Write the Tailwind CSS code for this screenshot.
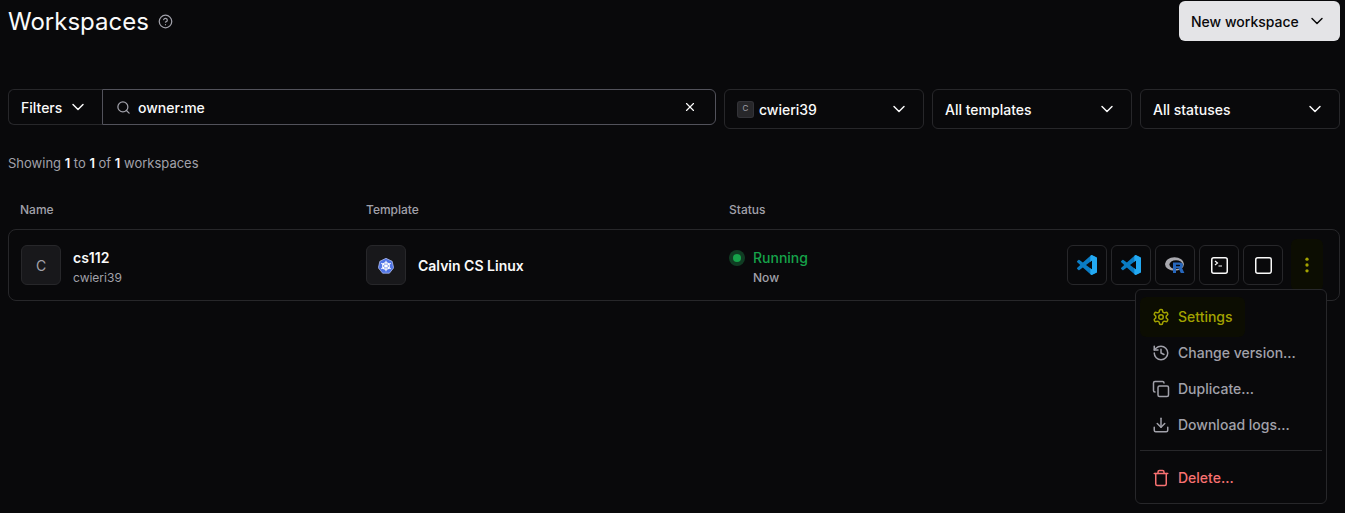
<!DOCTYPE html>
<html lang="en">
<head>
  <meta charset="UTF-8">
  <title>Workspaces</title>
  <script src="https://cdn.jsdelivr.net/npm/@tailwindcss/browser@4"></script>
</head>
<body class="bg-[#09090b] font-['Inter',sans-serif] text-white h-[513px] overflow-hidden">
  <div class="relative pl-2 pr-[5px] pt-px">

    <!-- Header -->
    <div class="flex items-center justify-between h-10">
      <div class="flex items-center gap-[9px]">
        <h1 class="mt-[2px] text-2xl leading-10 font-normal text-[#fafafa]">Workspaces</h1>
        <svg class="w-[15px] h-[15px] text-[#a1a1aa]" viewBox="0 0 24 24" fill="none" stroke="currentColor" stroke-width="2" stroke-linecap="round" stroke-linejoin="round"><circle cx="12" cy="12" r="10"/><path d="M9.1 9a3 3 0 0 1 5.8 1c0 2-3 3-3 3"/><path d="M12 17h.01"/></svg>
      </div>
      <button class="flex items-center gap-2 h-10 w-[161px] pl-3 rounded-md bg-[#e4e4e7] text-[#09090b] text-sm font-medium">
        <span class="pt-[2px]">New workspace</span>
        <svg class="w-5 h-5" viewBox="0 0 24 24" fill="none" stroke="currentColor" stroke-width="1.75" stroke-linecap="round" stroke-linejoin="round"><path d="m6 9 6 6 6-6"/></svg>
      </button>
    </div>

    <!-- Filters -->
    <div class="flex gap-2 mt-12 items-start">
      <div class="flex w-[708px] h-9 text-sm">
        <button class="flex items-center gap-[6px] w-[94px] pl-3 border border-r-0 border-[#27272a] rounded-l-md font-medium text-[#fafafa]">
          <span class="pt-[2px]">Filters</span>
          <svg class="w-5 h-5" viewBox="0 0 24 24" fill="none" stroke="currentColor" stroke-width="1.75" stroke-linecap="round" stroke-linejoin="round"><path d="m6 9 6 6 6-6"/></svg>
        </button>
        <div class="flex flex-1 items-center border border-[#52525b] rounded-r-md pl-[13px] pr-[18px]">
          <svg class="w-[15px] h-[15px] text-[#a1a1aa] mr-[7px]" viewBox="0 0 24 24" fill="none" stroke="currentColor" stroke-width="2" stroke-linecap="round" stroke-linejoin="round"><circle cx="11" cy="11" r="8"/><path d="m21 21-4.3-4.3"/></svg>
          <span class="flex-1 pt-[2px] font-medium text-[#fafafa]">owner:me</span>
          <svg class="w-[14px] h-[14px] text-[#fafafa]" viewBox="0 0 24 24" fill="none" stroke="currentColor" stroke-width="2" stroke-linecap="round" stroke-linejoin="round"><path d="M18 6 6 18"/><path d="m6 6 12 12"/></svg>
        </div>
      </div>
      <button class="flex items-center justify-between w-[200px] h-10 pl-3 pr-[14px] border border-[#27272a] rounded-md text-sm font-medium text-[#fafafa]">
        <span class="flex items-center gap-[5px]">
          <span class="flex items-center justify-center w-[17px] h-[17px] rounded-[3px] bg-[#27272a] border border-[#3f3f46]/50 text-[8px] font-normal text-[#a1a1aa]">C</span>
          <span class="pt-[2px]">cwieri39</span>
        </span>
        <svg class="w-5 h-5" viewBox="0 0 24 24" fill="none" stroke="currentColor" stroke-width="1.75" stroke-linecap="round" stroke-linejoin="round"><path d="m6 9 6 6 6-6"/></svg>
      </button>
      <button class="flex items-center justify-between w-[200px] h-10 pl-3 pr-[14px] border border-[#27272a] rounded-md text-sm font-medium text-[#fafafa]">
        <span class="pt-[2px]">All templates</span>
        <svg class="w-5 h-5" viewBox="0 0 24 24" fill="none" stroke="currentColor" stroke-width="1.75" stroke-linecap="round" stroke-linejoin="round"><path d="m6 9 6 6 6-6"/></svg>
      </button>
      <button class="flex items-center justify-between w-[200px] h-10 pl-3 pr-[14px] border border-[#27272a] rounded-md text-sm font-medium text-[#fafafa]">
        <span class="pt-[2px]">All statuses</span>
        <svg class="w-5 h-5" viewBox="0 0 24 24" fill="none" stroke="currentColor" stroke-width="1.75" stroke-linecap="round" stroke-linejoin="round"><path d="m6 9 6 6 6-6"/></svg>
      </button>
    </div>

    <!-- Count -->
    <p class="mt-[25px] text-[13px] leading-[18px] text-[#a1a1aa]">Showing <strong class="font-semibold text-[#fafafa]">1</strong> to <strong class="font-semibold text-[#fafafa]">1</strong> of <strong class="font-semibold text-[#fafafa]">1</strong> workspaces</p>

    <!-- Table head -->
    <div class="flex mt-[28px] h-[20px] items-center text-xs font-medium text-[#a1a1aa]">
      <div class="w-[358px] pl-3">Name</div>
      <div class="w-[363px]">Template</div>
      <div>Status</div>
    </div>

    <!-- Row -->
    <div class="flex items-center mt-[9px] h-[72px] border border-[#27272a] rounded-lg">
      <div class="flex items-center gap-3 w-[357px] pl-3">
        <div class="flex items-center justify-center w-10 h-10 pt-[2px] rounded-md bg-[#18181b] border border-[#27272a] text-sm text-[#a1a1aa]">C</div>
        <div class="mt-[6px]">
          <div class="text-sm leading-5 font-semibold text-[#fafafa]">cs112</div>
          <div class="text-xs leading-5 text-[#a1a1aa]">cwieri39</div>
        </div>
      </div>
      <div class="flex items-center gap-3 w-[363px]">
        <div class="flex items-center justify-center w-10 h-10 pt-[2px] rounded-md bg-[#18181b] border border-[#27272a]">
          <svg class="w-4 h-4" viewBox="0 0 24 24">
            <path d="M12 .5 21.2 4.9 23.5 14.8 17.1 22.8H6.9L.5 14.8 2.8 4.9Z" fill="#4f74e6" stroke="#c7d2fe" stroke-width="1"/>
            <g fill="none" stroke="#fff" stroke-width="1.6"><circle cx="12" cy="12" r="5"/><path d="M12 4v16M5 8l14 8M19 8 5 16"/></g>
          </svg>
        </div>
        <div class="mt-[2px] text-sm font-semibold text-[#fafafa]">Calvin CS Linux</div>
      </div>
      <div class="flex-1 mt-[6px]">
        <div class="flex items-center">
          <span class="flex items-center justify-center w-4 h-4 rounded-full bg-[#14532d]/70 mr-2"><span class="w-2 h-2 rounded-full bg-[#16a34a]"></span></span>
          <span class="text-sm leading-5 font-medium text-[#16a34a]">Running</span>
        </div>
        <div class="pl-6 text-xs leading-5 font-medium text-[#a1a1aa]">Now</div>
      </div>
      <div class="flex items-center gap-1 pr-4">
        <button class="flex items-center justify-center w-10 h-10 rounded-md border border-[#27272a]">
          <svg class="w-5 h-5" viewBox="0 0 24 24">
            <defs><clipPath id="vs-a"><rect x="16" y="0" width="8" height="24"/></clipPath></defs>
            <path fill="#0a7cc4" d="M23.15 2.587 18.21.21a1.494 1.494 0 0 0-1.705.29l-9.46 8.63-4.12-3.128a.999.999 0 0 0-1.276.057L.327 7.261A1 1 0 0 0 .326 8.74L3.899 12 .326 15.26a1 1 0 0 0 .001 1.479L1.65 17.94a.999.999 0 0 0 1.276.057l4.12-3.128 9.46 8.63a1.492 1.492 0 0 0 1.704.29l4.942-2.377A1.5 1.5 0 0 0 24 20.06V3.939a1.5 1.5 0 0 0-.85-1.352zm-5.146 14.861L10.826 12l7.178-5.448v10.896z"/>
            <path clip-path="url(#vs-a)" fill="#23a9f2" d="M23.15 2.587 18.21.21a1.494 1.494 0 0 0-1.705.29l-9.46 8.63-4.12-3.128a.999.999 0 0 0-1.276.057L.327 7.261A1 1 0 0 0 .326 8.74L3.899 12 .326 15.26a1 1 0 0 0 .001 1.479L1.65 17.94a.999.999 0 0 0 1.276.057l4.12-3.128 9.46 8.63a1.492 1.492 0 0 0 1.704.29l4.942-2.377A1.5 1.5 0 0 0 24 20.06V3.939a1.5 1.5 0 0 0-.85-1.352zm-5.146 14.861L10.826 12l7.178-5.448v10.896z"/>
          </svg>
        </button>
        <button class="flex items-center justify-center w-10 h-10 rounded-md border border-[#27272a]">
          <svg class="w-5 h-5" viewBox="0 0 24 24">
            <defs><clipPath id="vs-b"><rect x="16" y="0" width="8" height="24"/></clipPath></defs>
            <path fill="#0a7cc4" d="M23.15 2.587 18.21.21a1.494 1.494 0 0 0-1.705.29l-9.46 8.63-4.12-3.128a.999.999 0 0 0-1.276.057L.327 7.261A1 1 0 0 0 .326 8.74L3.899 12 .326 15.26a1 1 0 0 0 .001 1.479L1.65 17.94a.999.999 0 0 0 1.276.057l4.12-3.128 9.46 8.63a1.492 1.492 0 0 0 1.704.29l4.942-2.377A1.5 1.5 0 0 0 24 20.06V3.939a1.5 1.5 0 0 0-.85-1.352zm-5.146 14.861L10.826 12l7.178-5.448v10.896z"/>
            <path clip-path="url(#vs-b)" fill="#23a9f2" d="M23.15 2.587 18.21.21a1.494 1.494 0 0 0-1.705.29l-9.46 8.63-4.12-3.128a.999.999 0 0 0-1.276.057L.327 7.261A1 1 0 0 0 .326 8.74L3.899 12 .326 15.26a1 1 0 0 0 .001 1.479L1.65 17.94a.999.999 0 0 0 1.276.057l4.12-3.128 9.46 8.63a1.492 1.492 0 0 0 1.704.29l4.942-2.377A1.5 1.5 0 0 0 24 20.06V3.939a1.5 1.5 0 0 0-.85-1.352zm-5.146 14.861L10.826 12l7.178-5.448v10.896z"/>
          </svg>
        </button>
        <button class="flex items-center justify-center w-10 h-10 rounded-md border border-[#27272a]">
          <svg class="w-5 h-4" viewBox="0 0 20 16">
            <ellipse cx="9.5" cy="7" rx="9.5" ry="6.8" fill="#a8a8ae"/><ellipse cx="11" cy="7.6" rx="6.6" ry="4.4" fill="#09090b"/>
            <path d="M8 5.5h7.2a2.8 2.8 0 0 1 1.6 5.1L19.4 16h-3.6l-2.2-4.8H11V16H8Zm3 2.2v1.5h3.3a.75.75 0 0 0 0-1.5Z" fill="#2767bd" fill-rule="evenodd"/>
          </svg>
        </button>
        <button class="flex items-center justify-center w-10 h-10 rounded-md border border-[#27272a]">
          <svg class="w-[17px] h-[17px]" viewBox="0 0 17 17" fill="none" stroke="#fafafa" stroke-width="1.5"><rect x=".75" y=".75" width="15.5" height="15.5" rx="2"/><path stroke-width="1.2" d="m4 4 2.5 2L4 8M7.5 9H11"/></svg>
        </button>
        <button class="flex items-center justify-center w-10 h-10 rounded-md border border-[#27272a]">
          <svg class="w-[17px] h-[17px]" viewBox="0 0 17 17" fill="none" stroke="#fafafa" stroke-width="1.5"><rect x=".75" y=".75" width="15.5" height="15.5" rx="2"/></svg>
        </button>
        <button class="flex items-center justify-center w-8 h-[52px] ml-1 rounded-md bg-[#0c0d02]">
          <svg class="w-5 h-5" viewBox="0 0 24 24" fill="#a3a300"><circle cx="12" cy="5" r="2"/><circle cx="12" cy="12" r="2"/><circle cx="12" cy="19" r="2"/></svg>
        </button>
      </div>
    </div>

    <!-- Row menu -->
    <div class="absolute left-[1135px] top-[289px] w-[192px] h-[215px] pt-[9px] px-1 bg-[#09090b] border border-[#27272a] rounded-md text-sm font-medium text-[#a1a1aa]">
      <div class="flex items-center gap-2 h-10 -my-[2px] w-[105px] pl-3 rounded-md bg-[#0c0d02] text-[#a3a300] whitespace-nowrap">
        <svg class="w-[18px] h-[18px] shrink-0" viewBox="0 0 24 24" fill="none" stroke="currentColor" stroke-width="2" stroke-linecap="round" stroke-linejoin="round"><path d="M12.22 2h-.44a2 2 0 0 0-2 2v.18a2 2 0 0 1-1 1.73l-.43.25a2 2 0 0 1-2 0l-.15-.08a2 2 0 0 0-2.73.73l-.22.38a2 2 0 0 0 .73 2.73l.15.1a2 2 0 0 1 1 1.72v.51a2 2 0 0 1-1 1.74l-.15.09a2 2 0 0 0-.73 2.73l.22.38a2 2 0 0 0 2.73.73l.15-.08a2 2 0 0 1 2 0l.43.25a2 2 0 0 1 1 1.73V20a2 2 0 0 0 2 2h.44a2 2 0 0 0 2-2v-.18a2 2 0 0 1 1-1.73l.43-.25a2 2 0 0 1 2 0l.15.08a2 2 0 0 0 2.73-.73l.22-.39a2 2 0 0 0-.73-2.73l-.15-.08a2 2 0 0 1-1-1.74v-.5a2 2 0 0 1 1-1.74l.15-.09a2 2 0 0 0 .73-2.73l-.22-.38a2 2 0 0 0-2.73-.73l-.15.08a2 2 0 0 1-2 0l-.43-.25a2 2 0 0 1-1-1.73V4a2 2 0 0 0-2-2z"/><circle cx="12" cy="12" r="3"/></svg>
        Settings
      </div>
      <div class="flex items-center gap-2 h-9 pl-3">
        <svg class="w-[18px] h-[18px] shrink-0" viewBox="0 0 24 24" fill="none" stroke="currentColor" stroke-width="2" stroke-linecap="round" stroke-linejoin="round"><path d="M3 12a9 9 0 1 0 9-9 9.75 9.75 0 0 0-6.74 2.74L3 8"/><path d="M3 3v5h5"/><path d="M12 7v5l4 2"/></svg>
        Change version…
      </div>
      <div class="flex items-center gap-2 h-9 pl-3">
        <svg class="w-[18px] h-[18px] shrink-0" viewBox="0 0 24 24" fill="none" stroke="currentColor" stroke-width="2" stroke-linecap="round" stroke-linejoin="round"><rect x="8" y="8" width="14" height="14" rx="2" ry="2"/><path d="M4 16c-1.1 0-2-.9-2-2V4c0-1.1.9-2 2-2h10c1.1 0 2 .9 2 2"/></svg>
        Duplicate…
      </div>
      <div class="flex items-center gap-2 h-9 pl-3">
        <svg class="w-[18px] h-[18px] shrink-0" viewBox="0 0 24 24" fill="none" stroke="currentColor" stroke-width="2" stroke-linecap="round" stroke-linejoin="round"><path d="M21 15v4a2 2 0 0 1-2 2H5a2 2 0 0 1-2-2v-4"/><path d="m7 10 5 5 5-5"/><path d="M12 15V3"/></svg>
        Download logs…
      </div>
      <div class="h-px bg-[#27272a] mt-[7px] mb-[9px]"></div>
      <div class="flex items-center gap-2 h-9 pl-3 text-[#f87171]">
        <svg class="w-[18px] h-[18px] shrink-0" viewBox="0 0 24 24" fill="none" stroke="currentColor" stroke-width="2" stroke-linecap="round" stroke-linejoin="round"><path d="M3 6h18"/><path d="M19 6v14c0 1-1 2-2 2H7c-1 0-2-1-2-2V6"/><path d="M8 6V4c0-1 1-2 2-2h4c1 0 2 1 2 2v2"/></svg>
        Delete…
      </div>
    </div>
  </div>
</body>
</html>
